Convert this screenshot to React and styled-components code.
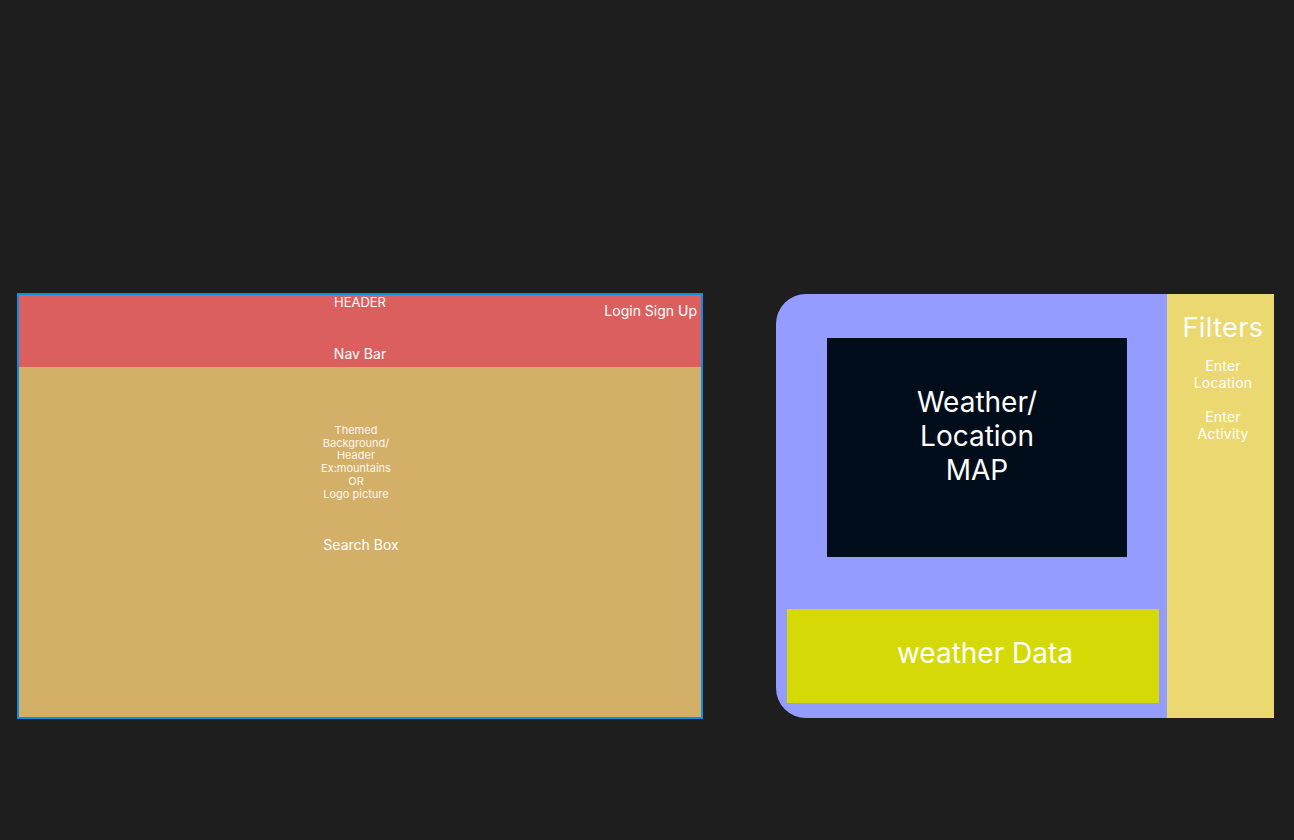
import React from 'react';
import styled, { createGlobalStyle } from 'styled-components';

const GlobalStyle = createGlobalStyle`
  html, body {
    margin: 0;
    padding: 0;
    background: #1e1e1e;
  }
  body {
    font-family: Inter, "Noto Sans", "Liberation Sans", sans-serif;
    color: #ffffff;
  }
`;

const Canvas = styled.div`
  width: 1294px;
  height: 840px;
  box-sizing: border-box;
  padding: 293px 0 0 17px;
  display: flex;
  align-items: flex-start;
  gap: 73px;
`;

// 왼쪽 와이어프레임 (랜딩 페이지)
const LandingFrame = styled.div`
  width: 686px;
  height: 426px;
  box-sizing: border-box;
  border: 2px solid #0f8be8;
  display: flex;
  flex-direction: column;
`;

const Header = styled.header`
  height: 72px;
  background: #dc5f5f;
  display: flex;
  flex-direction: column;
`;

const HeaderTop = styled.div`
  display: grid;
  grid-template-columns: 1fr auto 1fr;
  align-items: start;
`;

const HeaderTitle = styled.div`
  grid-column: 2;
  font-size: 13px;
  line-height: 15px;
`;

const AuthLinks = styled.div`
  grid-column: 3;
  justify-self: end;
  padding: 7px 4px 0 0;
  font-size: 14px;
  line-height: 17px;
`;

const NavBar = styled.nav`
  margin-top: 26px;
  text-align: center;
  font-size: 14px;
  line-height: 17px;
`;

const Hero = styled.section`
  flex: 1;
  background: #d4af68;
  display: flex;
  flex-direction: column;
  align-items: center;
  padding-top: 57px;
`;

const HeroNote = styled.div`
  margin-right: 8px;
  font-size: 11px;
  line-height: 12.7px;
  text-align: center;
  color: #fbf6ec;
`;

const SearchBox = styled.div`
  margin-top: 36px;
  margin-left: 2px;
  font-size: 14px;
  line-height: 17px;
`;

// 오른쪽 와이어프레임 (날씨/지도)
const WeatherFrame = styled.div`
  width: 498px;
  height: 424px;
  margin-top: 1px;
  display: flex;
`;

const MainPanel = styled.div`
  width: 391px;
  box-sizing: border-box;
  background: #949dff;
  border-radius: 30px 0 0 30px;
  padding: 44px 8px 15px 11px;
  display: flex;
  flex-direction: column;
`;

const MapBox = styled.div`
  width: 300px;
  height: 219px;
  margin-left: 40px;
  background: #010d1b;
  display: flex;
  align-items: center;
  justify-content: center;
  padding-bottom: 24px;
  box-sizing: border-box;
  font-size: 28px;
  line-height: 34px;
  text-align: center;
`;

const DataBox = styled.div`
  margin-top: 52px;
  height: 94px;
  background: #d5da07;
  display: flex;
  align-items: center;
  justify-content: center;
  padding: 0 0 6px 24px;
  box-sizing: border-box;
  font-size: 28px;
`;

const FilterPanel = styled.aside`
  flex: 1;
  background: #ecd870;
  display: flex;
  flex-direction: column;
  align-items: center;
  padding: 17px 0 0 5px;
`;

const FilterTitle = styled.div`
  font-size: 27px;
  line-height: 33px;
  letter-spacing: 0.4px;
`;

const FilterItem = styled.div`
  margin-top: ${p => p.$gap}px;
  font-size: 14px;
  line-height: 17px;
  text-align: center;
  letter-spacing: 0.2px;
`;

export default function App() {
  return (
    <>
      <GlobalStyle />
      <Canvas>
        <LandingFrame>
          <Header>
            <HeaderTop>
              <HeaderTitle>HEADER</HeaderTitle>
              <AuthLinks>Login Sign Up</AuthLinks>
            </HeaderTop>
            <NavBar>Nav Bar</NavBar>
          </Header>
          <Hero>
            <HeroNote>
              Themed<br />
              Background/<br />
              Header<br />
              Ex:mountains<br />
              OR<br />
              Logo picture
            </HeroNote>
            <SearchBox>Search Box</SearchBox>
          </Hero>
        </LandingFrame>

        <WeatherFrame>
          <MainPanel>
            <MapBox>
              <div>Weather/<br />Location<br />MAP</div>
            </MapBox>
            <DataBox>weather Data</DataBox>
          </MainPanel>
          <FilterPanel>
            <FilterTitle>Filters</FilterTitle>
            <FilterItem $gap={13}>Enter<br />Location</FilterItem>
            <FilterItem $gap={17}>Enter<br />Activity</FilterItem>
          </FilterPanel>
        </WeatherFrame>
      </Canvas>
    </>
  );
}
